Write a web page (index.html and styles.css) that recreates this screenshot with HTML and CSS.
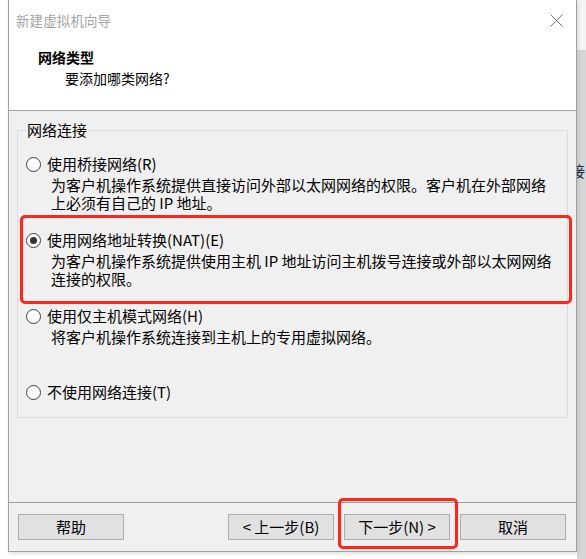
FILE: index.html
```html
<!DOCTYPE html>
<html lang="zh-CN">
<head>
    <meta charset="UTF-8">
    <title>新建虚拟机向导</title>
    <link rel="stylesheet" href="styles.css">
</head>
<body>
    <div class="screen">
        <div class="window">
            <div class="header">
                <div class="titlebar">
                    <span class="title">新建虚拟机向导</span>
                    <svg class="close" width="13" height="13" viewBox="0 0 13 13">
                        <path d="M0.5 0.5 L12.5 12.5 M12.5 0.5 L0.5 12.5" stroke="#777" stroke-width="1" fill="none"/>
                    </svg>
                </div>
                <div class="heading">网络类型</div>
                <div class="subheading">要添加哪类网络?</div>
            </div>

            <div class="content">
                <fieldset class="group">
                    <legend>网络连接</legend>
                    <div class="option">
                        <div class="option-label"><span class="radio"></span>使用桥接网络(R)</div>
                        <div class="option-desc">为客户机操作系统提供直接访问外部以太网网络的权限。客户机在外部网络<br>上必须有自己的 IP 地址。</div>
                    </div>
                    <div class="option">
                        <div class="option-label"><span class="radio checked"></span>使用网络地址转换(NAT)(E)</div>
                        <div class="option-desc">为客户机操作系统提供使用主机 IP 地址访问主机拨号连接或外部以太网网络<br>连接的权限。</div>
                    </div>
                    <div class="option">
                        <div class="option-label"><span class="radio"></span>使用仅主机模式网络(H)</div>
                        <div class="option-desc">将客户机操作系统连接到主机上的专用虚拟网络。</div>
                    </div>
                    <div class="option last">
                        <div class="option-label"><span class="radio"></span>不使用网络连接(T)</div>
                    </div>
                </fieldset>
            </div>

            <div class="footer">
                <button class="button">帮助</button>
                <div class="nav">
                    <button class="button">&lt; 上一步(B)</button>
                    <button class="button">下一步(N) &gt;</button>
                    <button class="button">取消</button>
                </div>
            </div>

            <div class="mark mark-nat"></div>
            <div class="mark mark-next"></div>
        </div>

        <div class="backdrop">
            <div class="backdrop-top"></div>
            <div class="backdrop-rest"><span class="backdrop-text">连接</span></div>
        </div>
    </div>
</body>
</html>
```

FILE: styles.css
```css
* {
    box-sizing: border-box;
}

body {
    margin: 0;
    background-color: #ffffff;
    font-family: "Noto Sans CJK SC", "Noto Sans", sans-serif;
    color: #000000;
}

.screen {
    display: flex;
    width: 586px;
    height: 559px;
    padding-left: 8px;
    overflow: hidden;
}

.window {
    position: relative;
    display: flex;
    flex-direction: column;
    width: 569px;
    height: 552px;
    border: 1px solid #a0a0a0;
    border-top: none;
    background-color: #f0f0f0;
    box-shadow: 1px 2px 4px rgba(0, 0, 0, 0.12);
}

.header {
    height: 111px;
    background-color: #ffffff;
    border-bottom: 1px solid #a0a0a0;
}

.titlebar {
    display: flex;
    justify-content: space-between;
    align-items: center;
    height: 40px;
    padding: 0 13px 0 7px;
}

.title {
    font-size: 13.5px;
    letter-spacing: 0.1px;
    color: #a3a3a3;
}

.close {
    display: block;
    margin-top: 1px;
}

.heading {
    margin-top: 7px;
    padding-left: 29px;
    font-size: 14px;
    font-weight: bold;
    line-height: 20px;
}

.subheading {
    margin-top: 1px;
    padding-left: 56px;
    font-size: 14px;
    line-height: 20px;
}

.content {
    flex: 1;
    padding: 10px 8px 0 8px;
}

.group {
    margin: 0;
    padding: 0 0 15px 8px;
    border: 1px solid #dcdcdc;
    font-size: 15px;
}

.group legend {
    padding: 0 1px;
    line-height: 18px;
    font-size: 15px;
}

.option {
    min-height: 58px;
    margin-bottom: 18px;
}

.option:first-of-type {
    margin-top: 15px;
}

.option.last {
    min-height: 20px;
    margin-bottom: 0;
}

.option-label {
    display: flex;
    align-items: center;
    height: 20px;
    line-height: 20px;
}

.radio {
    position: relative;
    flex: none;
    width: 15px;
    height: 15px;
    margin-right: 6px;
    border: 1px solid #3c3c3c;
    border-radius: 50%;
    background-color: #ffffff;
}

.radio.checked:after {
    content: "";
    position: absolute;
    left: 3px;
    top: 3px;
    width: 7px;
    height: 7px;
    border-radius: 50%;
    background-color: #333333;
}

.option-desc {
    margin-top: 2px;
    padding-left: 25px;
    line-height: 18px;
}

.footer {
    display: flex;
    justify-content: space-between;
    height: 49px;
    padding: 11px 10px 0 9px;
    border-top: 1px solid #a0a0a0;
}

.nav {
    display: flex;
    gap: 10px;
}

.button {
    width: 106px;
    height: 26px;
    padding: 0;
    border: 1px solid #adadad;
    background-color: #e1e1e1;
    font-family: "Noto Sans CJK SC", "Noto Sans", sans-serif;
    font-size: 15px;
    line-height: 22px;
    color: #000000;
}

.mark {
    position: absolute;
    border: 3px solid #ff2519;
    border-radius: 5px;
}

.mark-nat {
    left: 11px;
    top: 215px;
    width: 552px;
    height: 89px;
}

.mark-next {
    left: 329px;
    top: 498px;
    width: 120px;
    height: 51px;
}

.backdrop {
    display: flex;
    flex-direction: column;
    width: 9px;
    overflow: hidden;
}

.backdrop-top {
    height: 50px;
    background-color: #f4f4f4;
}

.backdrop-rest {
    flex: 1;
    padding-top: 112px;
    background-color: #d6d6d6;
}

.backdrop-text {
    display: block;
    margin-left: -22px;
    font-size: 15px;
    line-height: 18px;
    white-space: nowrap;
    color: #1a2a44;
}
```
